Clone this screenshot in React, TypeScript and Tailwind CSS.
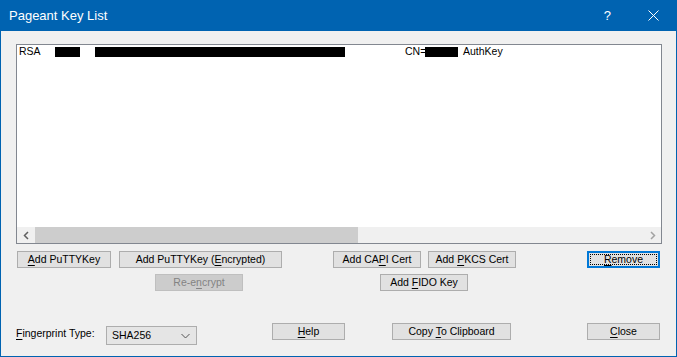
import React from 'react';

const font = { fontFamily: '"Liberation Sans", Arial, sans-serif' };

type BtnProps = {
  w: string;
  children: React.ReactNode;
  disabled?: boolean;
  focused?: boolean;
  className?: string;
};

const Btn: React.FC<BtnProps> = ({ w, children, disabled, focused, className = '' }) => {
  if (focused) {
    return (
      <div className={`${w} h-[17px] border-2 border-[#0078d7] bg-[#e1e1e1] p-[1px] shrink-0 ${className}`}>
        <div className="w-full h-full border border-dotted border-black flex items-center justify-center text-[10.5px] leading-none text-black">
          <span className="whitespace-pre">{children}</span>
        </div>
      </div>
    );
  }
  return (
    <div
      className={`${w} h-[17px] border shrink-0 flex items-center justify-center text-[10.5px] leading-none ${
        disabled ? 'bg-[#cccccc] border-[#bfbfbf] text-[#838383]' : 'bg-[#e1e1e1] border-[#adadad] text-black'
      } ${className}`}
    >
      <span className="whitespace-pre">{children}</span>
    </div>
  );
};

const U: React.FC<{ children: React.ReactNode }> = ({ children }) => (
  <span className="underline underline-offset-2">{children}</span>
);

const App: React.FC = () => {
  return (
    <div className="w-[677px] h-[357px] flex flex-col bg-[#f0f0f0] select-none" style={font}>
      {/* Title bar */}
      <div className="h-[31px] bg-[#0063b1] flex items-center shrink-0">
        <span className="ml-[9px] text-white text-[13px]">Pageant Key List</span>
        <span className="ml-auto text-white text-[13px]">?</span>
        <svg className="ml-[37px] mr-[18px]" width="11" height="11" viewBox="0 0 11 11">
          <path d="M0.5 0.5L10.5 10.5M10.5 0.5L0.5 10.5" stroke="white" strokeWidth="1" />
        </svg>
      </div>

      {/* Client area */}
      <div className="flex-1 flex flex-col border-x border-b border-[#0063b1] bg-[#f0f0f0]">
        {/* Key list */}
        <div className="ml-[15px] mt-[13px] w-[646px] h-[200px] border border-[#828790] bg-white flex flex-col">
          <div className="flex-1">
            <div className="flex items-center h-[11px] mt-[1px] text-[10.5px] leading-none text-black">
              <span className="w-[38px] pl-[2px]">RSA</span>
              <span className="w-[25px] h-[10px] bg-black" />
              <span className="w-[250px] h-[10px] bg-black ml-[15px]" />
              <span className="ml-[60px] w-[20px]">CN=</span>
              <span className="w-[33px] h-[10px] bg-black" />
              <span className="ml-[5px]">AuthKey</span>
            </div>
          </div>
          {/* Horizontal scrollbar */}
          <div className="h-[16px] flex bg-[#f0f0f0]">
            <div className="w-[18px] flex items-center justify-center">
              <svg width="7" height="9" viewBox="0 0 7 9">
                <path d="M5 1L1.5 4.5L5 8" stroke="#606060" strokeWidth="1.5" fill="none" />
              </svg>
            </div>
            <div className="w-[323px] bg-[#cdcdcd]" />
            <div className="flex-1" />
            <div className="w-[18px] flex items-center justify-center">
              <svg width="7" height="9" viewBox="0 0 7 9">
                <path d="M2 1L5.5 4.5L2 8" stroke="#a3a3a3" strokeWidth="1.5" fill="none" />
              </svg>
            </div>
          </div>
        </div>

        {/* Button row 1 */}
        <div className="flex mt-[7px]">
          <Btn w="w-[94px]" className="ml-[16px]"><U>A</U>dd PuTTYKey</Btn>
          <Btn w="w-[163px]" className="ml-[8px]">Add PuTTYKey (<U>E</U>ncrypted)</Btn>
          <Btn w="w-[88px]" className="ml-[51px]">Add CA<U>P</U>I Cert</Btn>
          <Btn w="w-[88px]" className="ml-[7px]">Add <U>P</U>KCS Cert</Btn>
          <Btn w="w-[73px]" className="ml-[71px]" focused><U>R</U>emove</Btn>
        </div>

        {/* Button row 2 */}
        <div className="flex mt-[6px]">
          <Btn w="w-[88px]" className="ml-[154px]" disabled>Re-e<U>n</U>crypt</Btn>
          <Btn w="w-[88px]" className="ml-[137px]">Add <U>F</U>IDO Key</Btn>
        </div>

        {/* Bottom row */}
        <div className="flex items-start mt-[32px]">
          <span className="ml-[15px] mt-[5px] w-[90px] text-[10.5px] leading-none text-black">
            <U>F</U>ingerprint Type:
          </span>
          <div className="mt-[3px] w-[91px] h-[19px] border border-[#adadad] bg-[#e5e5e5] flex items-center shrink-0">
            <span className="ml-[5px] text-[10.5px] leading-none text-black">SHA256</span>
            <svg className="ml-auto mr-[6px]" width="9" height="6" viewBox="0 0 9 6">
              <path d="M0.5 1L4.5 5L8.5 1" stroke="#555" strokeWidth="1" fill="none" />
            </svg>
          </div>
          <Btn w="w-[73px]" className="ml-[75px]"><U>H</U>elp</Btn>
          <Btn w="w-[119px]" className="ml-[47px]">Copy <U>T</U>o Clipboard</Btn>
          <Btn w="w-[73px]" className="ml-[76px]"><U>C</U>lose</Btn>
        </div>
      </div>
    </div>
  );
};

export default App;
